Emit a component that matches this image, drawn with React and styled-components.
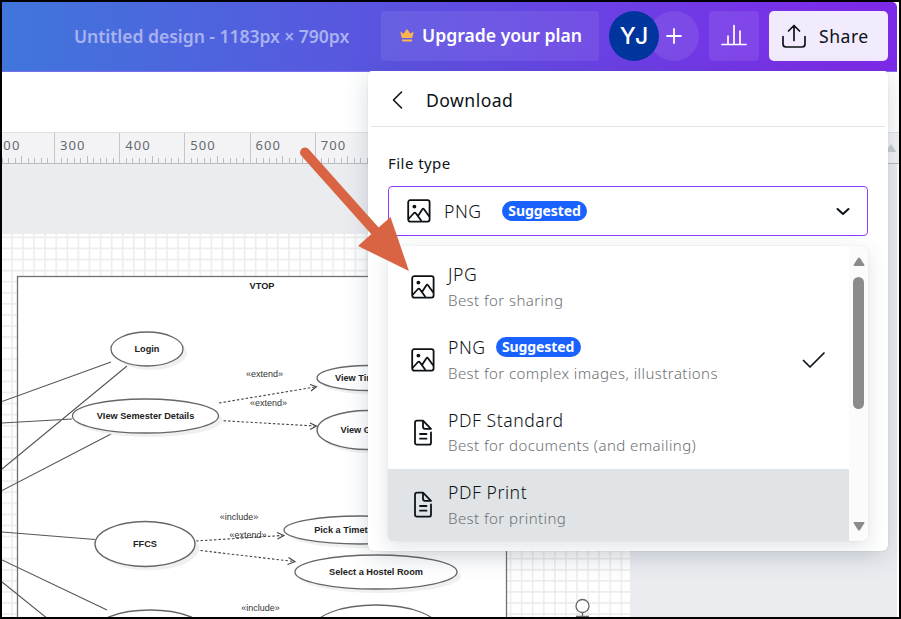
import React from 'react'
import styled, { createGlobalStyle } from 'styled-components'

const GlobalStyle = createGlobalStyle`
  * {
    box-sizing: border-box;
  }
  body {
    margin: 0;
    background: #000;
    font-family: 'Noto Sans', sans-serif;
    color: #0d1216;
  }
`

const Frame = styled.div`
  position: relative;
  display: flex;
  flex-direction: column;
  width: 901px;
  height: 619px;
  border: 2px solid #000;
  background: #fff;
  overflow: hidden;
`

const Header = styled.header`
  display: flex;
  flex: none;
  align-items: flex-start;
  width: 895px;
  height: 70px;
  padding-top: 9px;
  padding-left: 72px;
  border-bottom: 1px solid #7a6cf0;
  border-top-right-radius: 5px;
  background: linear-gradient(90deg, #4076db 0%, #5a54e0 42%, #7d2ae8 96%);
`

const DocTitle = styled.div`
  width: 307px;
  line-height: 50px;
  font-size: 17.6px;
  font-weight: 600;
  letter-spacing: -0.06px;
  color: #a9b2f0;
  white-space: nowrap;
`

const Upgrade = styled.button`
  display: flex;
  align-items: center;
  width: 218px;
  height: 50px;
  margin-right: 10px;
  padding: 0 0 2px 19px;
  gap: 8px;
  border: 0;
  border-radius: 4px;
  background: rgba(255, 255, 255, 0.08);
  color: #fff;
  font: 600 17.6px 'Noto Sans', sans-serif;
  white-space: nowrap;
`

const People = styled.div`
  display: flex;
  width: 90px;
  margin-right: 10px;
`

const Avatar = styled.div`
  z-index: 1;
  width: 50px;
  height: 50px;
  border-radius: 50%;
  background: #00359e;
  color: #fff;
  font-family: Inter, sans-serif;
  font-size: 23px;
  font-weight: 500;
  line-height: 50px;
  text-align: center;
`

const AddPerson = styled.div`
  display: flex;
  align-items: center;
  justify-content: center;
  width: 50px;
  height: 50px;
  margin-left: -10px;
  border-radius: 50%;
  background: rgba(255, 255, 255, 0.09);
`

const ChartButton = styled.button`
  display: flex;
  align-items: center;
  justify-content: center;
  width: 50px;
  height: 50px;
  margin-right: 10px;
  padding: 0;
  border: 0;
  border-radius: 4px;
  background: rgba(255, 255, 255, 0.09);
`

const ShareButton = styled.button`
  display: flex;
  align-items: center;
  width: 119px;
  height: 50px;
  padding: 0 0 1px 12px;
  gap: 12px;
  border: 0;
  border-radius: 5px;
  background: #f2eafd;
  color: #0d1216;
  font: 400 17.6px 'Noto Sans', sans-serif;
  letter-spacing: 0.5px;
`

const Toolbar = styled.div`
  flex: none;
  height: 60px;
`

const Ruler = styled.div`
  flex: none;
  height: 32px;
  border-top: 1px solid #dfe2e5;
  background: #f3f3f6;
`

const Workspace = styled.main`
  flex: 1;
  width: 895px;
  background: #ebecf0;
`

const Panel = styled.section`
  position: absolute;
  top: 69px;
  left: 366px;
  width: 520px;
  height: 480px;
  border-radius: 4px 4px 6px 6px;
  background: #fff;
  box-shadow: 0 0 1px rgba(64, 87, 109, 0.35), 0 6px 24px rgba(57, 76, 96, 0.2);
`

const PanelHead = styled.div`
  display: flex;
  align-items: center;
  height: 56px;
  margin: 0 3px;
  padding: 3px 0 0 20px;
  gap: 23px;
  border-bottom: 1px solid #e2e4e6;
  font-size: 17.6px;
  letter-spacing: 0.45px;
`

const PanelBody = styled.div`
  padding: 25px 20px 0;
`

const Label = styled.div`
  height: 34px;
  line-height: 22px;
  font-size: 15px;
  letter-spacing: 0.45px;
`

const Select = styled.div`
  display: flex;
  align-items: center;
  height: 50px;
  padding: 0 17px 0 18px;
  border: 1px solid #8b3dff;
  border-radius: 4px;
  font-size: 17.6px;
  font-weight: 300;

  svg:last-child {
    margin-left: auto;
  }
`

const SelectValue = styled.span`
  margin: 0 20px 0 13px;
  width: 38px;
  letter-spacing: 0.55px;
`

const Badge = styled.span`
  width: 85px;
  height: 20px;
  border-radius: 10px;
  background: #1a62ff;
  color: #fff;
  font-size: 14px;
  font-weight: 700;
  letter-spacing: -0.1px;
  line-height: 20px;
  text-align: center;
`

const Menu = styled.div`
  display: flex;
  height: 295px;
  margin-top: 10px;
  border-radius: 5px;
  overflow: hidden;
  background: #fff;
  box-shadow: 0 0 1px rgba(64, 87, 109, 0.3), 0 5px 20px rgba(57, 76, 96, 0.16);
`

const MenuList = styled.div`
  width: 461px;
  padding-top: 5px;
`

const Option = styled.div`
  display: flex;
  align-items: center;
  height: 72.7px;
  padding: 0 23px 0 23px;
  gap: 13px;
  background: ${props => (props.$active ? '#e0e4e6' : 'transparent')};

  > svg {
    flex: none;
  }
`

const OptionText = styled.div`
  flex: 1;
`

const OptionName = styled.div`
  display: flex;
  align-items: center;
  gap: 10px;
  height: 27px;
  font-size: 17.6px;
  font-weight: 300;
  letter-spacing: 0.55px;
`

const OptionHint = styled.div`
  height: 26px;
  line-height: 25px;
  font-size: 15px;
  font-weight: 300;
  letter-spacing: 0.43px;
  color: #6c7074;
  white-space: nowrap;
`

const Scrollbar = styled.div`
  display: flex;
  flex-direction: column;
  align-items: center;
  justify-content: space-between;
  width: 19px;
  padding: 11px 0 10px;
  background: #fbfbfb;
`

const Thumb = styled.div`
  width: 11px;
  height: 132px;
  margin-bottom: 102px;
  border-radius: 6px;
  background: #8b8b8b;
`

const PointerArrow = styled.svg`
  position: absolute;
  top: 0;
  left: 0;
  pointer-events: none;
`

const EdgeMark = styled.svg`
  position: absolute;
  top: 141px;
  left: 883px;
`

const ImageIcon = () => (
  <svg width="24" height="24" viewBox="0 0 24 24" fill="none" stroke="#0d1216" strokeWidth="1.8" strokeLinejoin="round">
    <rect x="1.2" y="1.2" width="21.4" height="21.4" rx="2" />
    <circle cx="7.4" cy="7.6" r="1.9" fill="#0d1216" stroke="none" />
    <path d="M1.5 20 L7 14 Q7.8 13.2 8.6 14 L14.5 22 M11 17 L15.4 10.2 Q16.2 9.2 17 10.200 L22.300 17.500" />
  </svg>
)

const FileIcon = () => (
  <svg width="24" height="28" viewBox="0 0 24 28" fill="none" stroke="#0d1216" strokeWidth="1.8" strokeLinecap="round" strokeLinejoin="round">
    <path d="M20 13.500 V23.700 Q20 25.700 18 25.700 H6 Q4 25.700 4 23.700 V3.700 Q4 1.700 6 1.700 H12 L20 9.800 H14 Q12 9.800 12 7.800 V2" />
    <path d="M9 15 H15.500 M9 19.700 H15.500" />
  </svg>
)

const options = [
  { name: 'JPG', hint: 'Best for sharing', icon: ImageIcon },
  { name: 'PNG', hint: 'Best for complex images, illustrations', icon: ImageIcon, suggested: true },
  { name: 'PDF Standard', hint: 'Best for documents (and emailing)', icon: FileIcon },
  { name: 'PDF Print', hint: 'Best for printing', icon: FileIcon, active: true },
]

const rulerMarks = [-11.2, 54, 119.2, 184.3, 249.5, 314.7]

const RulerScale = () => (
  <svg width="897" height="31" viewBox="2 0 897 31" style={{ display: 'block' }}>
    {rulerMarks.map((x, i) => (
      <g key={x}>
        <path d={`M${Math.round(x) + 0.5} 0 V31`} stroke="#c3c6ca" />
        {[1, 2, 3, 4, 5, 6, 7, 8, 9].map(n => (
          <path key={n} d={`M${Math.round(x + n * 6.52) + 0.5} ${n === 5 ? 23 : 25} V31`} stroke="#b9bcc1" />
        ))}
        <text x={x + 6} y="17" fontSize="13" letterSpacing="1.1" fill="#65696e">
          {(i + 2) * 100}
        </text>
      </g>
    ))}
    <path d="M0 30.5 H899" stroke="#b8bbc0" />
  </svg>
)

const useCases = [
  { x: 147, y: 349, rx: 36, ry: 17, text: 'Login' },
  { x: 145.5, y: 416, rx: 73, ry: 17, text: 'VIew Semester Details' },
  { x: 368, y: 378, rx: 51, ry: 12.5, text: 'View Timetable' },
  { x: 368, y: 430, rx: 51, ry: 19.5, text: 'View Grades' },
  { x: 145, y: 544, rx: 50, ry: 22.5, text: 'FFCS' },
  { x: 360, y: 530, rx: 76, ry: 14, text: 'Pick a Timetable Slot' },
  { x: 376, y: 572, rx: 81, ry: 17, text: 'Select a Hostel Room' },
  { x: 150, y: 632, rx: 56, ry: 22, text: '' },
  { x: 376, y: 628, rx: 62, ry: 23, text: '' },
]

const stereotypes = [
  { x: 264.5, y: 377, text: '«extend»' },
  { x: 268.5, y: 405.5, text: '«extend»' },
  { x: 239, y: 520, text: '«include»' },
  { x: 248, y: 537.5, text: '«extend»' },
  { x: 260.5, y: 610.5, text: '«include»' },
]

const Diagram = () => (
  <svg width="895" height="453" viewBox="2 164 895 453" fontFamily="'Liberation Sans', sans-serif" style={{ display: 'block' }}>
    <defs>
      <pattern id="grid" x="0" y="236.5" width="11.08" height="11.08" patternUnits="userSpaceOnUse">
        <path d="M0.8 0 V11.08 M0 0.8 H11.08" stroke="#ececec" strokeWidth="1.5" fill="none" />
      </pattern>
    </defs>
    <rect x="2" y="234" width="628" height="383" fill="#fff" />
    <rect x="2" y="234" width="628" height="383" fill="url(#grid)" />
    <rect x="17.5" y="276.5" width="489" height="360" fill="#fff" stroke="#707070" strokeWidth="1.3" />
    <path
      d="M2 401.5 L111 362 M127 366 L2 469 M2 423 L72 419 M112 433.5 L2 490.5 M2 532 L95 539.5 M2 560 L107 610 M2 582 L48 619"
      stroke="#555"
      strokeWidth="1.1"
      fill="none"
    />
    <g stroke="#444" strokeWidth="1.1" fill="none">
      <path strokeDasharray="2.5 2" d="M219 403 L315 387 M219 420.5 L315 426 M196 541 L282 535.5 M196 550 L294 561.5" />
      <path d="M310 384.5 L316.5 386.7 L311 391 M310 423 L316.5 426 L310 429.5 M277 532.5 L284 535.5 L277.5 539 M288.5 557.5 L295 561.7 L287.5 564.5" />
    </g>
    {useCases.map(c => (
      <g key={c.x + '-' + c.y}>
        <ellipse cx={c.x + 4} cy={c.y + 4} rx={c.rx} ry={c.ry} fill="#f0f0f0" />
        <ellipse cx={c.x} cy={c.y} rx={c.rx} ry={c.ry} fill="#fff" stroke="#666" strokeWidth="1.3" />
        <text x={c.x} y={c.y + 3.3} fontSize="9.2" fontWeight="700" textAnchor="middle" fill="#222">{c.text}</text>
      </g>
    ))}
    <text x="262" y="288.5" fontSize="9.2" fontWeight="700" textAnchor="middle" fill="#222">VTOP</text>
    {stereotypes.map(s => (
      <text key={s.x} x={s.x} y={s.y} fontSize="9" textAnchor="middle" fill="#333">{s.text}</text>
    ))}
    <circle cx="582.5" cy="606" r="6.5" fill="#fff" stroke="#666" strokeWidth="1.3" />
    <path d="M582.5 612.5 V618 M576 616.3 H589" stroke="#666" strokeWidth="1.3" />
  </svg>
)

const App = () => {
  return (
    <Frame>
      <GlobalStyle />
      <Header>
        <DocTitle>Untitled design - 1183px × 790px</DocTitle>
        <Upgrade>
          <svg width="14" height="13" viewBox="0 0 14 13" fill="#ffb54f">
            <path d="M0.3 2.5 L3.5 4.8 L6.5 0.5 H7.5 L10.5 4.8 L13.7 2.5 L12.3 9 H1.7 Z M2 10.5 H12 V12.5 H3 Q2 12.5 2 11.5 Z" />
          </svg>
          Upgrade your plan
        </Upgrade>
        <People>
          <Avatar>YJ</Avatar>
          <AddPerson>
            <svg width="16" height="16" viewBox="0 0 16 16" stroke="#fff" strokeWidth="1.8" strokeLinecap="round">
              <path d="M8 1 V15 M1 8 H15" />
            </svg>
          </AddPerson>
        </People>
        <ChartButton>
          <svg width="26" height="24" viewBox="0 0 26 24" stroke="#fff" strokeWidth="1.7" strokeLinecap="round">
            <path d="M1 20.5 H25 M7 12 V20 M13 1.5 V20 M19 7 V20" />
          </svg>
        </ChartButton>
        <ShareButton>
          <svg width="26" height="26" viewBox="0 0 26 26" fill="none" stroke="#0d1216" strokeWidth="1.7" strokeLinecap="round" strokeLinejoin="round">
            <path d="M2 13.5 V21 Q2 24 5 24 H21 Q24 24 24 21 V13.5 M13 17.5 V2.5 M7.5 8 L13 2.5 L18.5 8" />
          </svg>
          Share
        </ShareButton>
      </Header>
      <Toolbar />
      <Ruler>
        <RulerScale />
      </Ruler>
      <Workspace>
        <Diagram />
      </Workspace>

      <EdgeMark width="12" height="9" viewBox="0 0 12 9" fill="#c7ccd3">
        <path d="M0.5 9 L6 1 L11.500 9 Z" />
      </EdgeMark>

      <Panel>
        <PanelHead>
          <svg width="12" height="20" viewBox="0 0 12 20" fill="none" stroke="#0d1216" strokeWidth="1.6" strokeLinecap="round" strokeLinejoin="round">
            <path d="M10.500 2 L2.500 10 L10.500 18" />
          </svg>
          Download
        </PanelHead>
        <PanelBody>
          <Label>File type</Label>
          <Select>
            <ImageIcon />
            <SelectValue>PNG</SelectValue>
            <Badge>Suggested</Badge>
            <svg width="14" height="10" viewBox="0 0 14 10" fill="none" stroke="#0d1216" strokeWidth="2" strokeLinecap="round" strokeLinejoin="round">
              <path d="M1.5 3 L7 8 L12.5 3" />
            </svg>
          </Select>
          <Menu>
            <MenuList>
              {options.map(({ icon: Icon, ...option }) => (
                <Option key={option.name} $active={option.active}>
                  <Icon />
                  <OptionText>
                    <OptionName>
                      {option.name}
                      {option.suggested && <Badge>Suggested</Badge>}
                    </OptionName>
                    <OptionHint>{option.hint}</OptionHint>
                  </OptionText>
                  {option.suggested && (
                    <svg width="24" height="18" viewBox="0 0 24 18" fill="none" stroke="#0d1216" strokeWidth="1.7" strokeLinecap="round" strokeLinejoin="round">
                      <path d="M1.5 9.5 L8 16 L22 2" />
                    </svg>
                  )}
                </Option>
              ))}
            </MenuList>
            <Scrollbar>
              <svg width="12" height="9" viewBox="0 0 12 9" fill="#8b8b8b">
                <path d="M0.5 8 L5 1 Q6 -0.2 7 1 L11.5 8 Q11.5 9 10.5 9 H1.5 Q0.5 9 0.5 8" />
              </svg>
              <Thumb />
              <svg width="12" height="9" viewBox="0 0 12 9" fill="#8b8b8b">
                <path d="M0.5 1 L5 8 Q6 9.2 7 8 L11.5 1 Q11.5 0 10.5 0 H1.5 Q0.5 0 0.5 1" />
              </svg>
            </Scrollbar>
          </Menu>
        </PanelBody>
      </Panel>

      <PointerArrow width="897" height="615" viewBox="2 2 897 615">
        <path d="M305 152.5 L376 232" stroke="#d96444" strokeWidth="10" strokeLinecap="round" />
        <path d="M358 246 L377.5 228.5 L390.5 217 L409 271 Z" fill="#d96444" />
      </PointerArrow>
    </Frame>
  )
}

export default App
